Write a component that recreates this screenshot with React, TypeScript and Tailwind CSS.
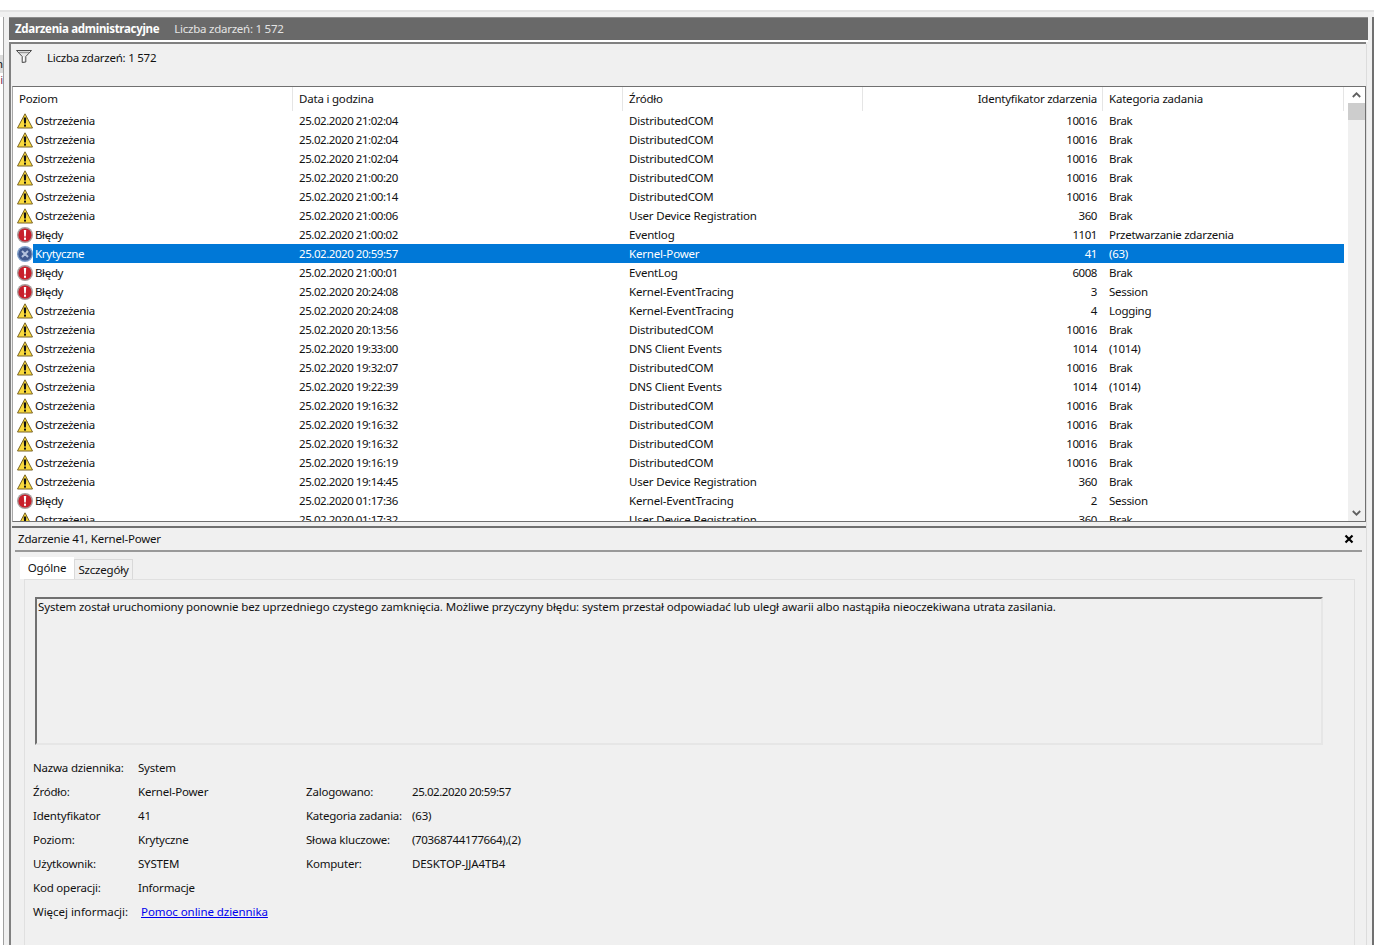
import React from 'react';

type Level = 'warn' | 'error' | 'critical';

interface EventRow {
  level: Level;
  date: string;
  source: string;
  id: string;
  category: string;
}

const LEVEL_LABEL: Record<Level, string> = {
  warn: 'Ostrzeżenia',
  error: 'Błędy',
  critical: 'Krytyczne',
};

const ROWS: EventRow[] = [
  { level: 'warn', date: '25.02.2020 21:02:04', source: 'DistributedCOM', id: '10016', category: 'Brak' },
  { level: 'warn', date: '25.02.2020 21:02:04', source: 'DistributedCOM', id: '10016', category: 'Brak' },
  { level: 'warn', date: '25.02.2020 21:02:04', source: 'DistributedCOM', id: '10016', category: 'Brak' },
  { level: 'warn', date: '25.02.2020 21:00:20', source: 'DistributedCOM', id: '10016', category: 'Brak' },
  { level: 'warn', date: '25.02.2020 21:00:14', source: 'DistributedCOM', id: '10016', category: 'Brak' },
  { level: 'warn', date: '25.02.2020 21:00:06', source: 'User Device Registration', id: '360', category: 'Brak' },
  { level: 'error', date: '25.02.2020 21:00:02', source: 'Eventlog', id: '1101', category: 'Przetwarzanie zdarzenia' },
  { level: 'critical', date: '25.02.2020 20:59:57', source: 'Kernel-Power', id: '41', category: '(63)' },
  { level: 'error', date: '25.02.2020 21:00:01', source: 'EventLog', id: '6008', category: 'Brak' },
  { level: 'error', date: '25.02.2020 20:24:08', source: 'Kernel-EventTracing', id: '3', category: 'Session' },
  { level: 'warn', date: '25.02.2020 20:24:08', source: 'Kernel-EventTracing', id: '4', category: 'Logging' },
  { level: 'warn', date: '25.02.2020 20:13:56', source: 'DistributedCOM', id: '10016', category: 'Brak' },
  { level: 'warn', date: '25.02.2020 19:33:00', source: 'DNS Client Events', id: '1014', category: '(1014)' },
  { level: 'warn', date: '25.02.2020 19:32:07', source: 'DistributedCOM', id: '10016', category: 'Brak' },
  { level: 'warn', date: '25.02.2020 19:22:39', source: 'DNS Client Events', id: '1014', category: '(1014)' },
  { level: 'warn', date: '25.02.2020 19:16:32', source: 'DistributedCOM', id: '10016', category: 'Brak' },
  { level: 'warn', date: '25.02.2020 19:16:32', source: 'DistributedCOM', id: '10016', category: 'Brak' },
  { level: 'warn', date: '25.02.2020 19:16:32', source: 'DistributedCOM', id: '10016', category: 'Brak' },
  { level: 'warn', date: '25.02.2020 19:16:19', source: 'DistributedCOM', id: '10016', category: 'Brak' },
  { level: 'warn', date: '25.02.2020 19:14:45', source: 'User Device Registration', id: '360', category: 'Brak' },
  { level: 'error', date: '25.02.2020 01:17:36', source: 'Kernel-EventTracing', id: '2', category: 'Session' },
  { level: 'warn', date: '25.02.2020 01:17:32', source: 'User Device Registration', id: '360', category: 'Brak' },
];

const LevelIcon = ({ level }: { level: Level }) => {
  if (level === 'warn') {
    return (
      <svg width="16" height="16" viewBox="0 0 16 16" className="shrink-0">
        <path d="M8 0.8 L15.5 15 L0.5 15 Z" fill="#f9d93c" stroke="#7a6526" strokeWidth="1" strokeLinejoin="round" />
        <path d="M6.7 4.5 H9.3 L8.9 10.6 H7.1 Z" fill="#111" />
        <rect x="7" y="11.6" width="2" height="2" fill="#111" />
      </svg>
    );
  }
  if (level === 'error') {
    return (
      <svg width="16" height="16" viewBox="0 0 16 16" className="shrink-0">
        <circle cx="8" cy="8" r="8" fill="#a89c9c" />
        <circle cx="8" cy="8" r="6.6" fill="#c81f2b" />
        <path d="M6.8 3 H9.2 L8.8 9.6 H7.2 Z" fill="#fff" />
        <rect x="7" y="10.6" width="2" height="2.2" fill="#fff" />
      </svg>
    );
  }
  return (
    <svg width="16" height="16" viewBox="0 0 16 16" className="shrink-0">
      <circle cx="8" cy="8" r="8" fill="#7f9fc9" />
      <circle cx="8" cy="8" r="6.6" fill="#41598f" />
      <path d="M5 5 L11 11 M11 5 L5 11" stroke="#b4c2dd" strokeWidth="2" />
    </svg>
  );
};

const FilterIcon = () => (
  <svg width="16" height="13" viewBox="0 0 16 13">
    <path d="M0.5 0.5 H15.5 L9.8 6.5 V12 L6.2 12.5 V6.5 Z" fill="#e8e8e8" stroke="#4a4a4a" strokeWidth="1" />
    <path d="M3 2.5 H13" stroke="#9a9a9a" strokeWidth="1.4" />
    <path d="M7.5 7 V11" stroke="#fff" strokeWidth="1" />
  </svg>
);

const Chevron = ({ down }: { down?: boolean }) => (
  <svg width="9" height="6" viewBox="0 0 9 6">
    <path d={down ? 'M0.8 1 L4.5 4.7 L8.2 1' : 'M0.8 5 L4.5 1.3 L8.2 5'} fill="none" stroke="#606060" strokeWidth="1.8" />
  </svg>
);

const Fields = () => (
  <div className="grid grid-cols-[105px_168px_106px_1fr] auto-rows-[24px] items-center -ml-[2px] mt-[11px]">
    <span>Nazwa dziennika:</span>
    <span className="col-span-3">System</span>
    <span>Źródło:</span>
    <span>Kernel-Power</span>
    <span>Zalogowano:</span>
    <span className="tracking-[-0.45px]">25.02.2020 20:59:57</span>
    <span>Identyfikator</span>
    <span>41</span>
    <span className="tracking-[-0.25px]">Kategoria zadania:</span>
    <span>(63)</span>
    <span>Poziom:</span>
    <span>Krytyczne</span>
    <span>Słowa kluczowe:</span>
    <span className="tracking-[-0.35px]">(70368744177664),(2)</span>
    <span>Użytkownik:</span>
    <span>SYSTEM</span>
    <span>Komputer:</span>
    <span className="tracking-[-0.1px]">DESKTOP-JJA4TB4</span>
    <span>Kod operacji:</span>
    <span className="col-span-3">Informacje</span>
    <span className="tracking-[-0.03px]">Więcej informacji:</span>
    <a className="col-span-3 ml-[3px] text-[#0000ee] underline tracking-[-0.07px]" href="#">Pomoc online dziennika</a>
  </div>
);

const COLS = 'grid-cols-[280px_330px_240px_240px_241px]';

const App: React.FC = () => {
  return (
    <div className="w-[1374px] h-[945px] overflow-hidden bg-[#f0f0f0] text-[11.5px] tracking-[-0.2px] leading-[16px] text-[#111] font-['Noto_Sans',sans-serif] flex flex-col">
      <div className="h-[12px] shrink-0 bg-white border-b-2 border-[#e3e3e3]" />
      <div className="flex-1 min-h-0 flex pt-[5px]">
        {/* left tree, mostly cut off */}
        <div className="w-[4px] shrink-0 bg-white border-r border-[#a0a0a0] overflow-hidden flex flex-col pt-[38px]">
          <div className="h-[18px] bg-[#dcdcdc] flex justify-end items-center overflow-hidden text-[#111]">n</div>
          <div className="h-[14px] flex justify-end items-center overflow-hidden text-[#7a1f50]">i</div>
        </div>
        <div className="w-[5px] shrink-0" />
        {/* main pane */}
        <div className="w-[1359px] shrink-0 flex flex-col">
          <div className="h-[23px] shrink-0 bg-[#696969] text-white flex items-center px-[6px] border-t border-[#8c8c8c]">
            <span className="font-bold tracking-[-0.3px]">Zdarzenia administracyjne</span>
            <span className="ml-[15px] text-[#e4e4e4] tracking-[-0.25px]">Liczba zdarzeń: 1 572</span>
          </div>
          <div className="h-[2px] shrink-0 bg-white" />
          <div className="h-[2px] shrink-0 bg-[#808080] mr-[2px]" />
          <div className="flex-1 min-h-0 flex flex-col border-l-2 border-r border-l-[#808080] border-r-[#dcdcdc] mr-[1px] pl-[1px]">
            <div className="h-[42px] shrink-0 flex items-start pl-[4px] pt-[6px]">
              <FilterIcon />
              <span className="ml-[15px] tracking-[-0.25px]">Liczba zdarzeń: 1 572</span>
            </div>
            <div className="h-[436px] shrink-0 bg-white border-t border-r border-b border-[#707070] border-l border-l-[#a8a8a8] flex">
              <div className="w-[1332px] shrink-0 overflow-hidden">
                <div className={`h-[24px] grid ${COLS} items-center`}>
                  <span className="pl-[6px] h-full flex items-center border-r border-[#e5e5e5]">Poziom</span>
                  <span className="pl-[6px] h-full flex items-center border-r border-[#e5e5e5]">Data i godzina</span>
                  <span className="pl-[6px] h-full flex items-center border-r border-[#e5e5e5]">Źródło</span>
                  <span className="pr-[5px] h-full flex items-center justify-end border-r border-[#e5e5e5] tracking-[-0.25px]">Identyfikator zdarzenia</span>
                  <span className="pl-[6px] h-full flex items-center border-r border-[#e5e5e5]">Kategoria zadania</span>
                </div>
                {ROWS.map((row, i) => {
                  const selected = row.level === 'critical';
                  const cell = selected ? 'bg-[#0078d7]' : '';
                  return (
                    <div key={i} className={`h-[19px] grid ${COLS} items-center ${selected ? 'text-white' : ''}`}>
                      <div className="h-full flex items-center pl-[4px]">
                        <LevelIcon level={row.level} />
                        <span className={`h-full flex items-center flex-1 pl-[2px] tracking-[-0.35px] ${cell}`}>{LEVEL_LABEL[row.level]}</span>
                      </div>
                      <span className={`h-full flex items-center pl-[6px] tracking-[-0.45px] ${cell}`}>{row.date}</span>
                      <span className={`h-full flex items-center pl-[6px] tracking-[-0.18px] ${cell}`}>{row.source}</span>
                      <span className={`h-full flex items-center justify-end pr-[6px] tracking-[-0.45px] ${cell}`}>{row.id}</span>
                      <span className={`h-full flex items-center pl-[6px] tracking-[-0.3px] ${cell}`}>{row.category}</span>
                    </div>
                  );
                })}
              </div>
              <div className="w-[17px] ml-[3px] shrink-0 bg-[#f0f0f0] flex flex-col">
                <div className="h-[16px] flex items-center justify-center bg-white">
                  <Chevron />
                </div>
                <div className="h-[17px] bg-[#cdcdcd]" />
                <div className="flex-1" />
                <div className="h-[16px] flex items-center justify-center">
                  <Chevron down />
                </div>
              </div>
            </div>
            <div className="h-[4px] shrink-0" />
            <div className="flex-1 min-h-0 border-t-2 border-[#707070] flex flex-col pl-[3px] pr-[4px]">
              <div className="h-[24px] shrink-0 flex items-center justify-between border-b-2 border-[#999] pr-[8px] pl-[3px] mb-[5px]">
                <span>Zdarzenie 41, Kernel-Power</span>
                <svg width="10" height="10" viewBox="0 0 10 10">
                  <path d="M1.5 1.5 L8.5 8.5 M8.5 1.5 L1.5 8.5" stroke="#000" strokeWidth="2.2" />
                </svg>
              </div>
              <div className="flex ml-[5px] h-[22px] shrink-0 items-end">
                <div className="h-[22px] w-[54px] bg-white flex items-center justify-center">Ogólne</div>
                <div className="h-[20px] w-[59px] border-t border-l border-r border-[#d9d9d9] flex items-center justify-center">Szczegóły</div>
              </div>
              <div className="ml-[9px] w-[1331px] flex-1 min-h-0 border-t border-l border-r border-[#e0e0e0] pl-[10px] pr-[31px] pt-[17px]">
                <div className="h-[148px] border-t-2 border-l-2 border-b-2 border-r-2 border-t-[#707070] border-l-[#707070] border-b-[#e6e6e6] border-r-[#e6e6e6] pl-[1px] tracking-[-0.14px]">
                  System został uruchomiony ponownie bez uprzedniego czystego zamknięcia. Możliwe przyczyny błędu: system przestał odpowiadać lub uległ awarii albo nastąpiła nieoczekiwana utrata zasilania.
                </div>
                <Fields />
              </div>
            </div>
          </div>
        </div>
        <div className="w-[4px] shrink-0" />
        <div className="w-[2px] shrink-0 bg-[#707070]" />
      </div>
    </div>
  );
};

export default App;
